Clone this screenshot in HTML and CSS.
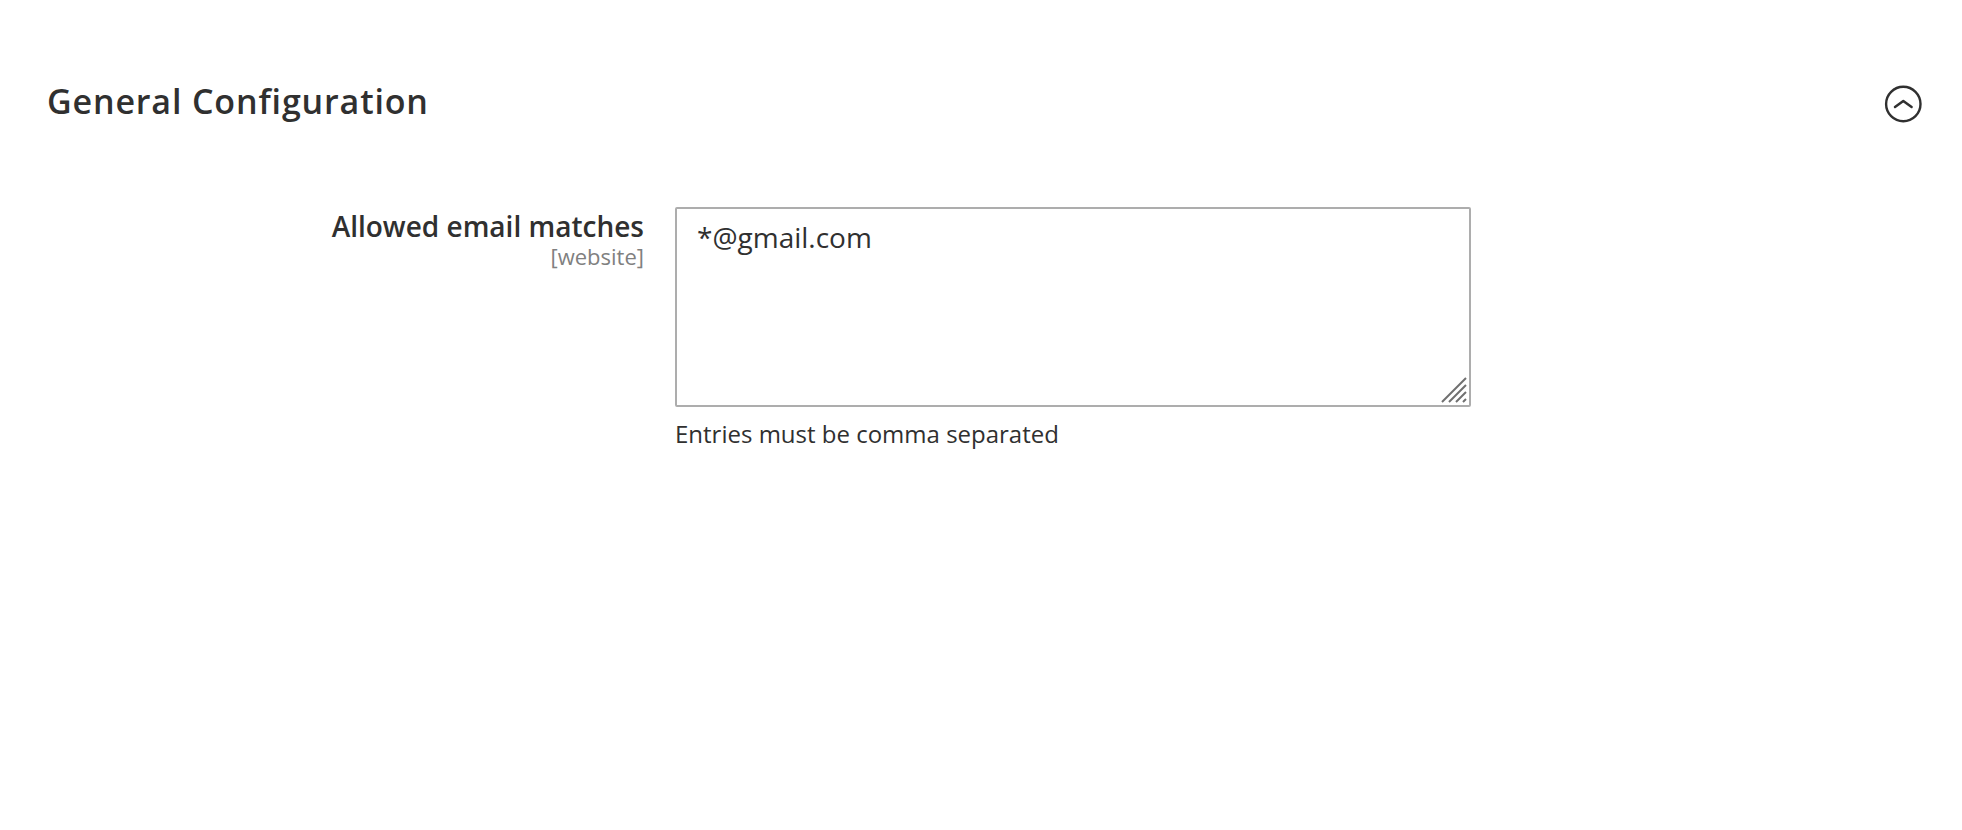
FILE: index.html
```html
<!DOCTYPE html>
<html lang="en">
<head>
<meta charset="utf-8">
<title>General Configuration</title>
<link rel="stylesheet" href="styles.css">
</head>
<body>
<main class="section">
  <header class="section-header">
    <h1 class="section-title">General Configuration</h1>
    <button class="toggle" type="button" aria-expanded="true" aria-label="Collapse section">
      <svg class="toggle-icon" viewBox="0 0 38 38" fill="none" stroke="currentColor">
        <circle cx="19.3" cy="19" r="17.2" stroke-width="2.4"/>
        <path d="M11 22 19.3 16 27.6 22" stroke-width="2.5" stroke-linecap="round" stroke-linejoin="round"/>
      </svg>
    </button>
  </header>
  <div class="field">
    <label class="field-label" for="emails">
      <span class="field-name">Allowed email matches</span>
      <span class="field-scope">[website]</span>
    </label>
    <div class="field-value">
      <div class="textarea-wrap">
        <textarea class="textarea" id="emails" aria-describedby="emails-note" spellcheck="false">*@gmail.com</textarea>
        <svg class="grip" viewBox="0 0 26 26" fill="none" stroke="currentColor" aria-hidden="true">
          <path d="M1 25 25 1M8 25 25 8M15 25 25 15M22 25 25 22"/>
        </svg>
      </div>
      <p class="note" id="emails-note">Entries must be comma separated</p>
    </div>
  </div>
</main>
</body>
</html>
```
FILE: styles.css
```css
* {
  box-sizing: border-box;
}

body {
  margin: 0;
  background: #fff;
  color: #303030;
  font-family: "Open Sans", "Noto Sans", sans-serif;
}

.section {
  padding: 77px 40px 40px 47px;
}

.section-header {
  display: flex;
  align-items: center;
  justify-content: space-between;
}

.section-title {
  margin: 0;
  font-size: 34px;
  line-height: 48px;
  font-weight: 600;
  letter-spacing: 0.025em;
}

.toggle {
  display: block;
  margin: 6px 0 0;
  padding: 0;
  border: 0;
  background: none;
  color: #303030;
}

.toggle-icon {
  display: block;
  width: 38px;
  height: 38px;
}

.field {
  display: grid;
  grid-template-columns: 597px minmax(0, 796px);
  column-gap: 31px;
  margin-top: 82px;
}

.field-label {
  display: flex;
  flex-direction: column;
  padding-top: 2px;
  text-align: right;
}

.field-name {
  font-size: 28px;
  line-height: 34px;
  font-weight: 600;
}

.field-scope {
  color: #808080;
  font-size: 22px;
  line-height: 26px;
}

.textarea-wrap {
  position: relative;
}

.textarea {
  display: block;
  width: 100%;
  height: 200px;
  padding: 10px 20px;
  border: 2px solid #adadad;
  border-radius: 2px;
  color: #303030;
  font-family: inherit;
  font-size: 28px;
  line-height: 36px;
  resize: none;
}

.grip {
  position: absolute;
  right: 4px;
  bottom: 4px;
  width: 26px;
  height: 26px;
  color: #707070;
  stroke-width: 2;
  pointer-events: none;
}

.note {
  margin: 10px 0 0;
  font-size: 24px;
  line-height: 34px;
}
```
